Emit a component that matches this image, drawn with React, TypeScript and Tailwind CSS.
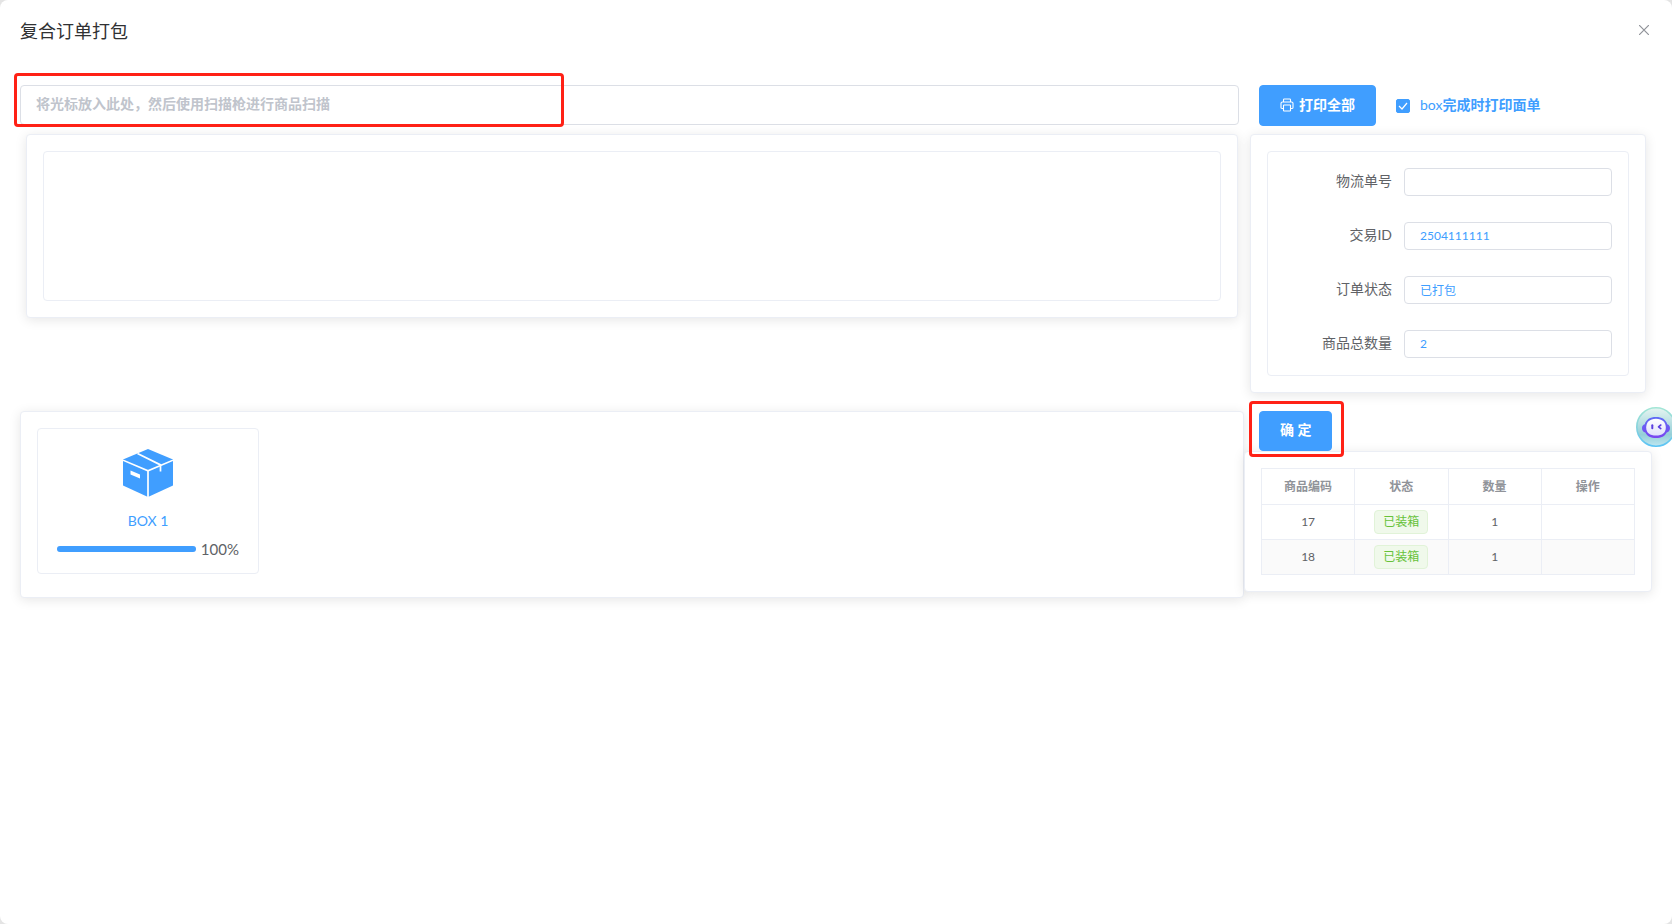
import type { ReactNode } from 'react';

interface OrderField {
  id: string;
  label: string;
  value: string;
}

interface GoodsRow {
  code: string;
  status: string;
  count: number;
}

const fields: OrderField[] = [
  { id: 'tracking', label: '物流单号', value: '' },
  { id: 'trade', label: '交易ID', value: '2504111111' },
  { id: 'status', label: '订单状态', value: '已打包' },
  { id: 'total', label: '商品总数量', value: '2' },
];

const goods: GoodsRow[] = [
  { code: '17', status: '已装箱', count: 1 },
  { code: '18', status: '已装箱', count: 1 },
];

const columns = ['商品编码', '状态', '数量', '操作'];

const boxes = [{ name: 'BOX 1', percent: 100 }];

function Card({ className = '', children }: { className?: string; children: ReactNode }) {
  return (
    <div className={`rounded border border-[#ebeef5] bg-white p-4 shadow-[0_2px_12px_0_rgba(0,0,0,0.1)] ${className}`}>
      {children}
    </div>
  );
}

function PrinterIcon() {
  return (
    <svg className="h-3.5 w-3.5" viewBox="0 0 14 14" fill="none" stroke="currentColor" strokeWidth={1.1}>
      <path d="M3.500 4V1.800a.8.8 0 0 1 .8-.8h5.400a.8.8 0 0 1 .8.8V4" />
      <path d="M3.500 10.500H2.100A1.100 1.100 0 0 1 1 9.400V5.400A1.400 1.400 0 0 1 2.400 4h9.200A1.400 1.400 0 0 1 13 5.400v4a1.100 1.100 0 0 1-1.100 1.100h-1.400" />
      <rect x="3.500" y="7" width="7" height="6" rx=".6" />
    </svg>
  );
}

function BoxIcon() {
  return (
    <svg className="h-12 w-[50px]" viewBox="0 0 50 48">
      <path fill="#409eff" d="M25 0l25 10.500v26L25 48 0 36.500v-26z" />
      <g fill="none" stroke="#fff" strokeWidth={1.700}>
        <path d="M0 11.200l25 10.600 25-10.600M25 21.800V48" />
        <path d="M14.500 4.500l23 11.400v6.600" />
      </g>
      <path fill="#fff" d="M7.500 21.500l9.500 4v4l-9.500-4z" />
    </svg>
  );
}

function Robot() {
  return (
    <svg className="h-10 w-10" viewBox="0 0 40 40">
      <defs>
        <linearGradient id="ring" x1="0" y1="0" x2="0" y2="1">
          <stop offset="0" stopColor="#a3e6d6" />
          <stop offset=".5" stopColor="#86d3dc" />
          <stop offset="1" stopColor="#5cc4f5" />
        </linearGradient>
        <linearGradient id="disc" x1="0" y1="0" x2="0" y2="1">
          <stop offset="0" stopColor="#e6f5f1" />
          <stop offset=".7" stopColor="#94cfd8" />
          <stop offset="1" stopColor="#bfe6f0" />
        </linearGradient>
        <linearGradient id="head" x1="0" y1="0" x2="0" y2="1">
          <stop offset="0" stopColor="#5f6df5" />
          <stop offset="1" stopColor="#7a45f0" />
        </linearGradient>
        <linearGradient id="face" x1="0" y1="0" x2="0" y2="1">
          <stop offset="0" stopColor="#ffffff" />
          <stop offset="1" stopColor="#dfe0fb" />
        </linearGradient>
      </defs>
      <circle cx="20" cy="20" r="19.200" fill="url(#disc)" stroke="url(#ring)" strokeWidth={1.600} />
      <path fill="url(#head)" d="M20 10c6 0 10 2.600 11.200 7.200 1.900.4 2.800 2 2.800 4s-1.300 3.800-3.300 4.200C28.800 29.300 25.200 31 20 31s-8.800-1.700-10.700-5.600C7.300 25 6 23.200 6 21.200s.9-3.600 2.800-4C10 12.600 14 10 20 10z" />
      <path fill="url(#face)" d="M20 11.800c6.500 0 9.800 3.600 9.800 8.800 0 5.400-3.600 8-9.800 8s-9.800-2.600-9.800-8c0-5.200 3.300-8.800 9.800-8.800z" />
      <path fill="none" stroke="#5b3fe0" strokeWidth={2} strokeLinecap="round" d="M16.300 18.300v3" />
      <path fill="none" stroke="#5b3fe0" strokeWidth={1.600} strokeLinecap="round" strokeLinejoin="round" d="M24.800 18l-2.300 1.800 2.300 1.800" />
    </svg>
  );
}

export default function App() {
  return (
    <div className="bg-[#e4e4e4] font-[Lato,'Noto_Sans_CJK_SC',sans-serif] text-sm text-[#606266]">
      <div className="min-h-screen rounded-lg bg-white px-5">
        <header className="flex h-[85px] items-start justify-between pt-[18px]">
          <h1 className="pt-px text-lg leading-6 font-normal text-[#303133]">复合订单打包</h1>
          <button type="button" aria-label="关闭" className="flex h-6 w-4 items-center justify-center text-[#909399]">
            <svg className="h-2.5 w-2.5" viewBox="0 0 10 10" stroke="currentColor" strokeWidth={1.200}>
              <path d="M0 0l10 10M10 0L0 10" />
            </svg>
          </button>
        </header>

        {/* Scan bar */}
        <div className="grid grid-cols-[3fr_1fr]">
          <div className="relative pr-[5px]">
            <input
              type="text"
              aria-label="商品扫描"
              placeholder="将光标放入此处，然后使用扫描枪进行商品扫描"
              className="block h-10 w-full rounded border border-[#dcdfe6] px-[15px] pb-1 outline-none placeholder:font-bold placeholder:text-[#c0c4cc]"
            />
            <div className="pointer-events-none absolute -top-3 -left-1.5 h-[54px] w-[550px] rounded-sm border-3 border-[#ff2116]" />
          </div>
          <div className="flex items-center pl-[15px]">
            <button type="button" className="flex h-[41px] items-center gap-[5px] rounded border border-[#409eff] bg-[#409eff] px-5 pb-0.5 font-bold whitespace-nowrap text-white">
              <PrinterIcon />
              <span>打印全部</span>
            </button>
            <label className="ml-5 flex items-center gap-2.5 whitespace-nowrap text-[#409eff]">
              <span className="relative flex h-3.5 w-3.5">
                <input type="checkbox" defaultChecked className="peer h-3.5 w-3.5 appearance-none rounded-xs border border-[#dcdfe6] checked:border-[#409eff] checked:bg-[#409eff]" />
                <svg className="pointer-events-none absolute inset-0 hidden peer-checked:block" viewBox="0 0 14 14" fill="none" stroke="#fff" strokeWidth={1.200}>
                  <path d="M3 7l3 3 5-6" />
                </svg>
              </span>
              <span className="pb-0.5">box<b>完成时打印面单</b></span>
            </label>
          </div>
        </div>

        {/* Scanned goods and order info */}
        <div className="mt-2 grid grid-cols-[3fr_1fr] items-start">
          <Card className="mx-1.5">
            <div className="h-[150px] rounded border border-[#ebeef5]" />
          </Card>
          <Card className="mx-1.5">
            <form className="flex flex-col gap-[26px] rounded border border-[#ebeef5] px-4 pt-4 pb-[17px]">
              {fields.map((field) => (
                <div key={field.id} className="flex h-7 items-center gap-3">
                  <label htmlFor={field.id} className="flex-1 pb-0.5 text-right whitespace-nowrap">
                    {field.label}
                  </label>
                  <input
                    id={field.id}
                    type="text"
                    defaultValue={field.value}
                    className="h-7 w-[208px] rounded border border-[#dcdfe6] px-[15px] pb-0.5 text-xs text-[#409eff] outline-none"
                  />
                </div>
              ))}
            </form>
          </Card>
        </div>

        {/* Boxes and their contents */}
        <div className="mt-[18px] grid grid-cols-[3fr_1fr] items-start">
          <Card className="h-[187px]">
            <div className="flex flex-wrap gap-4">
              {boxes.map((box) => (
                <div key={box.name} className="flex h-[146px] w-[222px] flex-col items-center rounded border border-[#ebeef5] px-[19px] pt-5">
                  <BoxIcon />
                  <div className="mt-3.5 leading-5 text-[#409eff]">{box.name}</div>
                  <div className="mt-2 flex w-full items-center gap-[5px]">
                    <div className="h-1.5 flex-1 rounded-full bg-[#ebeef5]">
                      <div className="h-1.5 rounded-full bg-[#409eff]" style={{ width: `${box.percent}%` }} />
                    </div>
                    <span className="text-[15px] leading-5">{box.percent}%</span>
                  </div>
                </div>
              ))}
            </div>
          </Card>
          <div>
            <div className="relative z-10 ml-[15px] w-fit">
              <button type="button" className="flex h-10 items-center rounded border border-[#409eff] bg-[#409eff] px-5 pb-0.5 font-bold whitespace-nowrap text-white">
                确 定
              </button>
              <div className="pointer-events-none absolute -top-2.5 -right-3 -bottom-1.5 -left-2.5 rounded-sm border-3 border-[#ff2116]" />
            </div>
            <Card>
              <table className="w-full table-fixed border-collapse text-center text-xs">
                <thead>
                  <tr className="h-9 text-[#909399]">
                    {columns.map((column) => (
                      <th key={column} className="border border-[#ebeef5] font-bold">{column}</th>
                    ))}
                  </tr>
                </thead>
                <tbody>
                  {goods.map((row) => (
                    <tr key={row.code} className="h-[35px] even:bg-[#fafafa]">
                      <td className="border border-[#ebeef5]">{row.code}</td>
                      <td className="border border-[#ebeef5]">
                        <span className="mx-auto flex h-6 w-fit items-center rounded border border-[#e1f3d8] bg-[#f0f9eb] px-2 text-[#67c23a]">
                          {row.status}
                        </span>
                      </td>
                      <td className="border border-[#ebeef5]">{row.count}</td>
                      <td className="border border-[#ebeef5]" />
                    </tr>
                  ))}
                </tbody>
              </table>
            </Card>
          </div>
        </div>
      </div>

      <button type="button" aria-label="智能助手" className="fixed top-[407px] -right-1">
        <Robot />
      </button>
    </div>
  );
}
